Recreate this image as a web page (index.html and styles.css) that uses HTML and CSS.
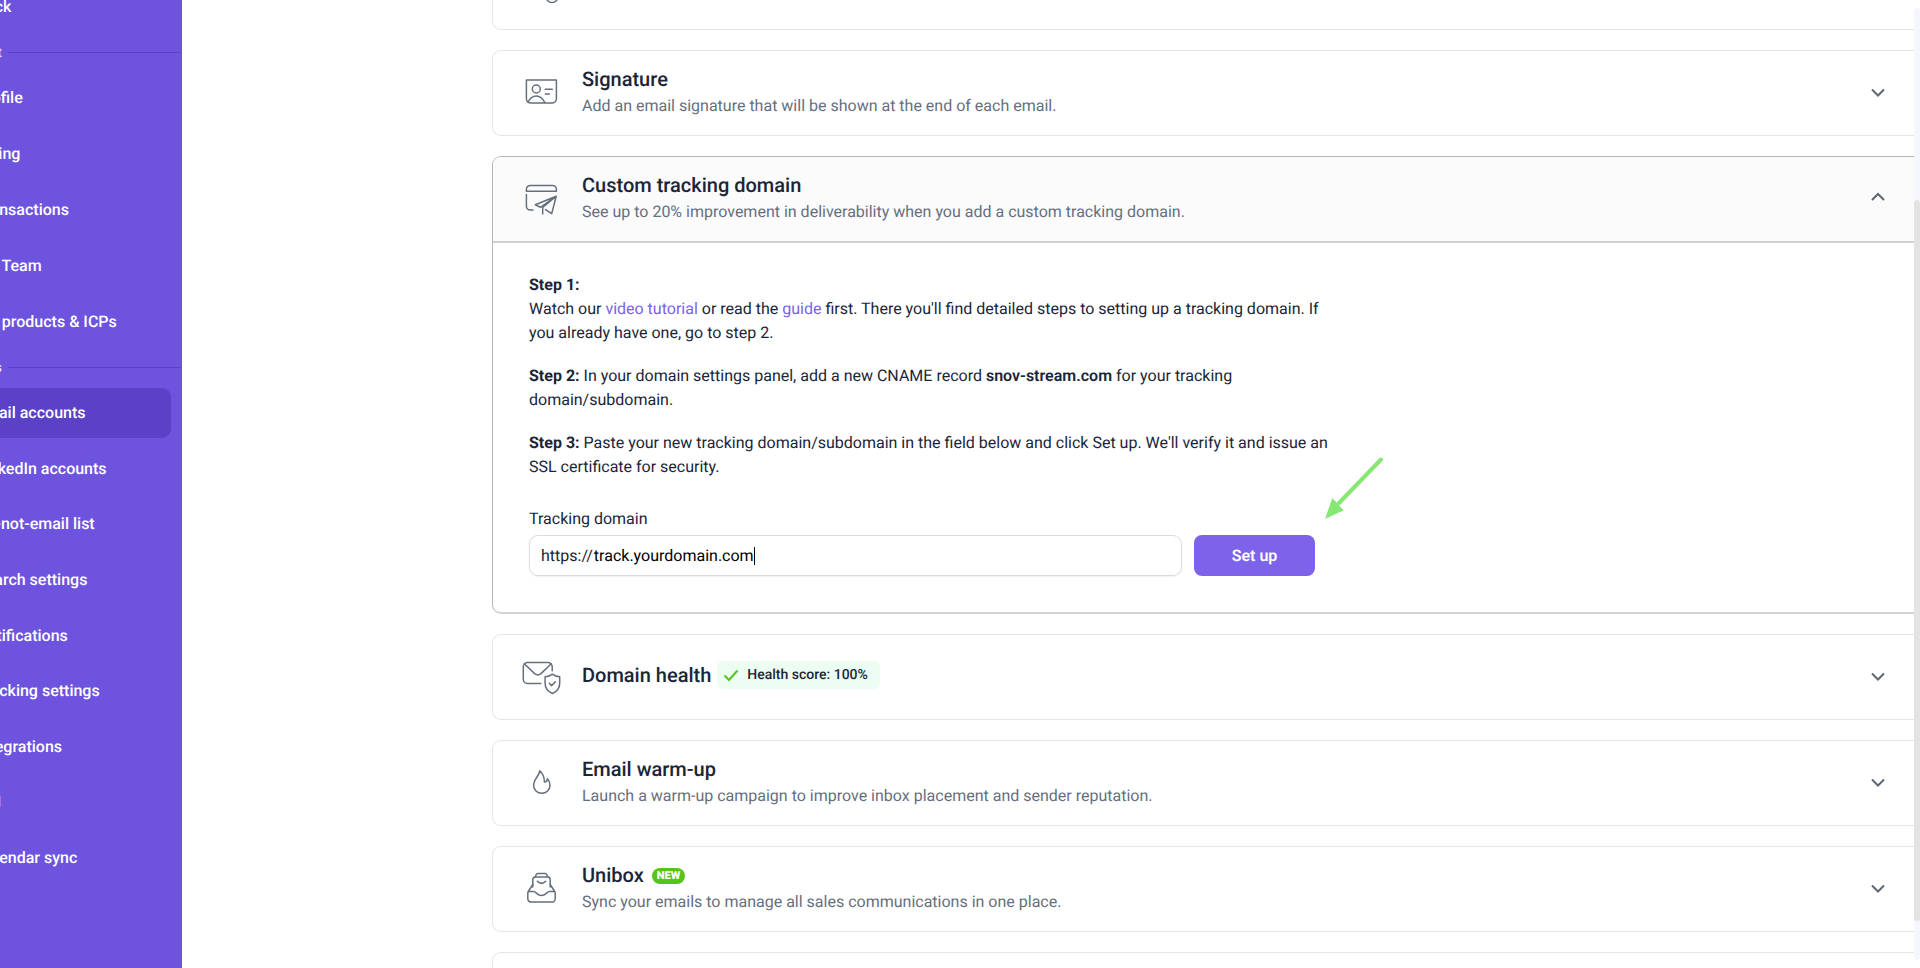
FILE: index.html
```html
<!DOCTYPE html>
<html lang="en">
<head>
<meta charset="utf-8">
<title>Email account settings</title>
<link rel="stylesheet" href="styles.css">
</head>
<body>
<div class="app">
  <aside class="sidebar">
    <nav class="nav" aria-label="Settings">
      <a class="nav-item nav-top" href="#">Back</a>
      <div class="nav-heading"><span class="nav-heading-text">Account</span></div>
      <div class="nav-group">
        <a class="nav-item" href="#">Profile</a>
        <a class="nav-item" href="#">Billing</a>
        <a class="nav-item" href="#">Transactions</a>
        <a class="nav-item" href="#">My Team</a>
        <a class="nav-item" href="#">My products &amp; ICPs</a>
      </div>
      <div class="nav-heading"><span class="nav-heading-text">Settings</span></div>
      <div class="nav-group nav-group-fill">
        <a class="nav-item active" href="#" aria-current="page">Email accounts</a>
        <a class="nav-item" href="#">LinkedIn accounts</a>
        <a class="nav-item" href="#">Do-not-email list</a>
        <a class="nav-item" href="#">Search settings</a>
        <a class="nav-item" href="#">Notifications</a>
        <a class="nav-item" href="#">Tracking settings</a>
        <a class="nav-item" href="#">Integrations</a>
        <a class="nav-item" href="#">API</a>
        <a class="nav-item" href="#">Calendar sync</a>
      </div>
    </nav>
  </aside>

  <main class="main">
    <section class="card">
      <div class="card-header">
        <svg class="card-icon" viewBox="0 0 44 44"><circle cx="32" cy="31.5" r="6"/></svg>
      </div>
    </section>

    <section class="card">
      <div class="card-header">
        <svg class="card-icon" viewBox="0 0 44 44">
          <path d="M6.4 9h30v18.500a4.500 4.500 0 0 1-4.500 4.500h-21a4.500 4.500 0 0 1-4.500-4.500z"/>
          <circle cx="16.300" cy="18" r="4"/>
          <path d="M8 31.300C10 27 13 25 16.300 25s6.300 2 8.500 6.500M25.300 18.300h7M25.300 23h4"/>
        </svg>
        <div class="card-text">
          <h2 class="card-title">Signature</h2>
          <p class="card-desc">Add an email signature that will be shown at the end of each email.</p>
        </div>
        <button class="toggle" type="button" aria-label="Expand Signature"><svg class="chevron" viewBox="0 0 14 18"><path d="M1 5.500l6 6 6-6"/></svg></button>
      </div>
    </section>

    <section class="card open">
      <div class="card-header">
        <svg class="card-icon" viewBox="0 0 44 44">
          <path d="M6.400 14.200v-2a3.800 3.800 0 0 1 3.800-3.800h22.400a3.800 3.800 0 0 1 3.800 3.800v2z"/>
          <path d="M6.400 17.500v11.700a3.800 3.800 0 0 0 3.800 3.800h2.800"/>
          <path d="M36.200 19.200L15.300 27.800l5.200 2.500zM36.200 19.200L22.700 30.500V37M36.200 19.200L31.700 36.600 25.500 32.600"/>
        </svg>
        <div class="card-text">
          <h2 class="card-title">Custom tracking domain</h2>
          <p class="card-desc">See up to 20% improvement in deliverability when you add a custom tracking domain.</p>
        </div>
        <button class="toggle" type="button" aria-label="Collapse Custom tracking domain"><svg class="chevron" viewBox="0 0 14 18"><path d="M1 10l6-6 6 6"/></svg></button>
      </div>
      <div class="card-body">
        <div class="setup">
          <div class="steps">
            <p class="step"><strong>Step 1:</strong><br>Watch our <a class="link" href="#">video tutorial</a> or read the <a class="link" href="#">guide</a> first. There you'll find detailed steps to setting up a tracking domain. If you already have one, go to step 2.</p>
            <p class="step"><strong>Step 2:</strong> In your domain settings panel, add a new CNAME record <strong class="domain">snov-stream.com</strong> for your tracking domain/subdomain.</p>
            <p class="step"><strong>Step 3:</strong> Paste your new tracking domain/subdomain in the field below and click Set up. We'll verify it and issue an SSL certificate for security.</p>
          </div>
          <form class="form">
            <label class="label" for="tracking-domain">Tracking domain</label>
            <div class="form-row">
              <div class="field">
                <span class="prefix">https://</span>
                <input class="field-input" id="tracking-domain" type="text" value="track.yourdomain.com">
                <span class="caret"></span>
              </div>
              <button class="submit" type="button">Set up</button>
            </div>
          </form>
          <svg class="arrow" viewBox="0 0 62 64"><path class="arrow-shaft" d="M58 2.500L16 46"/><path class="arrow-head" d="M2 62L9.300 41 20.800 53.300z"/></svg>
        </div>
      </div>
    </section>

    <section class="card">
      <div class="card-header">
        <svg class="card-icon" viewBox="0 0 44 44">
          <path d="M32.200 15.700v-4a4.300 4.300 0 0 0-4.300-4.300H7.600a4.300 4.300 0 0 0-4.300 4.300v12.600a4.300 4.300 0 0 0 4.300 4.300h13.200"/>
          <path d="M4.300 8.800L14.600 18.600q3.200 2.600 6.400 0L31.300 8.800"/>
          <path d="M32.400 19.200q3.200 2.600 7.300 2.600v6.400c0 5-3 8.400-7.300 10.300-4.300-1.900-7.300-5.300-7.300-10.300v-6.400q4.100 0 7.300-2.600z"/>
          <path d="M29.300 28.300l2.300 2.300 3.800-3.800"/>
        </svg>
        <div class="card-text card-text-row">
          <h2 class="card-title">Domain health</h2>
          <span class="health"><svg class="health-check" viewBox="0 0 16 16"><path d="M1.500 8.500l4.500 4.500L14.500 3.500"/></svg>Health score: 100%</span>
        </div>
        <button class="toggle" type="button" aria-label="Expand Domain health"><svg class="chevron" viewBox="0 0 14 18"><path d="M1 5.500l6 6 6-6"/></svg></button>
      </div>
    </section>

    <section class="card">
      <div class="card-header">
        <svg class="card-icon" viewBox="0 0 44 44">
          <path d="M19.700 9.800C19.700 14.500 13.600 18 13.600 24.300c0 4.500 3.600 8 8.200 8s8.200-3.500 8.200-8c0-2.600-.7-4.800-2.600-6.600 0 2-1 3.300-3 3.300 0-4.800-1-8.200-4.700-11.200z"/>
        </svg>
        <div class="card-text">
          <h2 class="card-title">Email warm-up</h2>
          <p class="card-desc">Launch a warm-up campaign to improve inbox placement and sender reputation.</p>
        </div>
        <button class="toggle" type="button" aria-label="Expand Email warm-up"><svg class="chevron" viewBox="0 0 14 18"><path d="M1 5.500l6 6 6-6"/></svg></button>
      </div>
    </section>

    <section class="card">
      <div class="card-header">
        <svg class="card-icon" viewBox="0 0 44 44">
          <path d="M15.300 9.800l.8-2a2 2 0 0 1 1.800-1.200h7.200a2 2 0 0 1 1.800 1.200l.8 2"/>
          <path d="M12.800 20v-7.400a2.600 2.600 0 0 1 2.600-2.600h12.200a2.600 2.600 0 0 1 2.600 2.600V20"/>
          <path d="M17.300 14.300q4.200 4.200 8.400 0"/>
          <path d="M12.800 17.500L8.300 24.500a4 4 0 0 0-.5 2v5.200a3.400 3.400 0 0 0 3.400 3.400h20.600a3.400 3.400 0 0 0 3.400-3.400v-5.200a4 4 0 0 0-.5-2l-4.500-7"/>
          <path d="M8.300 24.500h5.200c2.600 0 3.600 4 8 4s5.400-4 8-4h5.200"/>
        </svg>
        <div class="card-text">
          <h2 class="card-title">Unibox <span class="new">NEW</span></h2>
          <p class="card-desc">Sync your emails to manage all sales communications in one place.</p>
        </div>
        <button class="toggle" type="button" aria-label="Expand Unibox"><svg class="chevron" viewBox="0 0 14 18"><path d="M1 5.500l6 6 6-6"/></svg></button>
      </div>
    </section>

    <section class="card"><div class="card-header"></div></section>
  </main>
  <div class="scroll-track"><div class="scroll-thumb"></div></div>
</div>
</body>
</html>
```

FILE: styles.css
```css
* { box-sizing: border-box; }

body {
  margin: 0;
  overflow: hidden;
  background: #fff;
  color: #1b2538;
  font-family: Roboto, "Liberation Sans", sans-serif;
  font-size: 16px;
  line-height: 24px;
  text-rendering: geometricPrecision;
}

h2, p { margin: 0; }

.app { display: flex; height: 100vh; overflow: hidden; }

.sidebar {
  flex: none;
  width: 182px;
  background: #6d53dd;
  overflow: hidden;
}
.nav {
  display: flex;
  flex-direction: column;
  height: 100%;
  margin-left: -60px;
  padding-bottom: 85px;
}
.nav-item {
  display: flex;
  align-items: center;
  flex: none;
  height: 50px;
  margin-right: 11px;
  padding-left: 36px;
  border-radius: 0 9px 9px 0;
  color: #fff;
  font-weight: 500;
  text-decoration: none;
}
.nav-item.active { background: #5a41c8; }
.nav-top { margin-top: -18px; }
.nav-heading {
  display: flex;
  align-items: center;
  flex: none;
  height: 41px;
  margin-right: 1px;
  gap: 6px;
  color: #e2dcfb;
  font-size: 14px;
  font-weight: 500;
}
.nav-heading-text { width: 62px; text-align: right; }
.nav-heading::after { content: ""; flex: 1; height: 1px; background: #5a41c8; }
.nav-group { display: flex; flex-direction: column; gap: 6px; }
.nav-group-fill { flex: 1; justify-content: space-between; gap: 0; }

/* Accordion */
.main {
  flex: 1;
  min-width: 0;
  display: flex;
  flex-direction: column;
  gap: 20px;
  margin-top: -56px;
  padding-left: 310px;
}
.card {
  flex: none;
  border: 1px solid #e4e5e7;
  border-right: 0;
  border-radius: 9px 0 0 9px;
  overflow: hidden;
}
.card-header {
  display: flex;
  align-items: center;
  gap: 18px;
  min-height: 84px;
  padding: 0 29px 0 27px;
}
.card-icon {
  flex: none;
  width: 44px;
  height: 44px;
  fill: none;
  stroke: #656f7e;
  stroke-width: 1.5;
  stroke-linecap: round;
  stroke-linejoin: round;
}
.card-text { flex: 1; padding-bottom: 2px; }
.card-text-row { display: flex; align-items: center; gap: 6px; padding-bottom: 4px; }
.card-title {
  display: flex;
  align-items: center;
  gap: 8px;
  font-size: 20px;
  font-weight: 500;
  line-height: 28px;
}
.card-desc { color: #656f7e; line-height: 26px; }
.toggle {
  display: flex;
  padding: 0;
  border: 0;
  background: none;
}
.chevron {
  width: 14px;
  height: 18px;
  fill: none;
  stroke: #5c6675;
  stroke-width: 2;
}

.card.open { border-color: #b4b5b7; border-bottom: 2px solid #d2d3d4; }
.card.open .card-header { background: #fbfbfc; border-bottom: 2px solid #cfd0d1; min-height: 86px; }
.card-body { padding: 30px 36px 36px; }
.setup { position: relative; max-width: 786px; }
.steps { margin-right: -18px; }
.step { margin-bottom: 19px; }
.step strong { font-weight: 700; }
.step .domain { font-weight: 600; }
.link { color: #7b61ea; text-decoration: none; }

.form { padding-top: 9px; }
.label { display: block; margin-bottom: 4px; }
.form-row { display: flex; gap: 12px; }
.field {
  flex: 1;
  display: flex;
  align-items: center;
  height: 41px;
  padding: 0 11px;
  border: 1px solid #dcdcde;
  border-radius: 9px;
  box-shadow: 0 1px 2px rgba(0, 0, 0, 0.06);
}
.field-input {
  field-sizing: content;
  margin: 0 0 0 1px;
  padding: 0;
  border: 0;
  outline: 0;
  background: none;
  color: #000;
  font: inherit;
  text-rendering: inherit;
}
.caret { width: 1px; height: 18px; background: #000; }
.submit {
  width: 121px;
  height: 41px;
  border: 0;
  border-radius: 8px;
  background: #7d62ea;
  color: #fff;
  font: inherit;
  font-weight: 600;
  text-rendering: inherit;
}
.arrow {
  position: absolute;
  left: calc(100% + 8px);
  bottom: 55px;
  width: 62px;
  height: 64px;
}
.arrow-shaft { fill: none; stroke: #86e873; stroke-width: 4; stroke-linecap: round; }
.arrow-head { fill: #86e873; }

.health {
  display: flex;
  align-items: center;
  gap: 8px;
  height: 28px;
  padding: 0 12px 0 6px;
  border-radius: 6px;
  background: #ecfdf2;
  font-size: 14px;
  font-weight: 500;
}
.health-check { width: 16px; height: 16px; fill: none; stroke: #58c41b; stroke-width: 2; }
.new {
  margin-top: 2px;
  padding: 0 5px;
  border-radius: 8px;
  background: #58c41b;
  color: #fff;
  font-size: 11px;
  font-weight: 900;
  line-height: 16px;
}

.scroll-track {
  flex: none;
  width: 6px;
  margin: 8px 0;
  padding-top: 192px;
  border-radius: 3px;
  background: #f6f6fe;
}
.scroll-thumb { height: calc(100% - 39px); border-radius: 3px; background: #e3e3e3; }
```
